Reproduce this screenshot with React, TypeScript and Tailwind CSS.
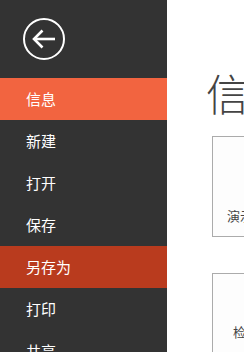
const items = [
  { label: "信息", active: "current" },
  { label: "新建" },
  { label: "打开" },
  { label: "保存" },
  { label: "另存为", active: "hover" },
  { label: "打印" },
  { label: "共享" },
];

export default function App() {
  return (
    <div
      className="flex h-[352px] w-[244px] overflow-hidden bg-white"
      style={{ fontFamily: '"Noto Sans CJK SC", "Noto Sans", sans-serif' }}
    >
      {/* Backstage nav */}
      <nav className="flex w-[167px] shrink-0 flex-col bg-[#333333] text-white">
        <div className="flex h-[78px] shrink-0 items-center pl-[23px]">
          <svg width="42" height="42" viewBox="0 0 42 42" fill="none" stroke="white">
            <circle cx="21" cy="21" r="20" strokeWidth="2" />
            <path d="M11 21h21" strokeWidth="2.6" />
            <path d="M19.5 12.5L11 21l8.5 8.5" strokeWidth="2.6" />
          </svg>
        </div>
        {items.map((it) => (
          <div
            key={it.label}
            className={`flex h-[42px] shrink-0 items-center pl-[26px] text-[15px] ${
              it.active === "current"
                ? "bg-[#f26440]"
                : it.active === "hover"
                ? "bg-[#b93b1e]"
                : ""
            }`}
          >
            {it.label}
          </div>
        ))}
      </nav>

      {/* Content */}
      <main className="flex-1 overflow-hidden">
        <h1 className="mt-[62px] ml-[39px] whitespace-nowrap text-[43px] font-light leading-[60px] text-[#444444]">
          信息
        </h1>
        <div className="mt-[14px] ml-[45px] flex w-[200px] flex-col gap-[36px]">
          <div className="h-[101px] border border-[#ababab] bg-[#fdfdfd] pt-[70px] pl-[14px]">
            <p className="whitespace-nowrap text-[13px] leading-[18px] text-[#444444]">演示文稿</p>
          </div>
          <div className="h-[101px] border border-[#ababab] bg-[#fdfdfd] pt-[49px] pl-[20px]">
            <p className="whitespace-nowrap text-[13px] leading-[18px] text-[#444444]">检查演示文稿</p>
          </div>
        </div>
      </main>
    </div>
  );
}
